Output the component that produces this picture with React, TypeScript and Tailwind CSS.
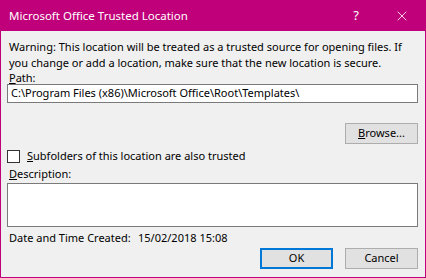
import { X } from "lucide-react";

export default function App() {
  return (
    <div className="flex h-[278px] w-[426px] flex-col overflow-hidden whitespace-nowrap border border-[#c0007a] bg-[#f0f0f0] font-['Noto_Sans',sans-serif] text-[11px] text-black">
      <div className="flex h-[30px] items-center bg-[#c0007a] pl-[8px] text-[11.5px] text-white">
        <span className="flex-1">Microsoft Office Trusted Location</span>
        <span className="w-[46px] text-center text-[13px]">?</span>
        <span className="flex w-[46px] items-center justify-center">
          <X size={16} strokeWidth={1.2} />
        </span>
      </div>
      <div className="flex flex-1 flex-col pl-[6px] pr-[7px] pt-[8px]">
        <p className="pl-[2px] leading-[16px]">
          Warning: This location will be treated as a trusted source for opening files. If
          <br />
          you change or add a location, make sure that the new location is secure.
        </p>
        <div className="pl-[2px] leading-[13px]">
          <u>P</u>ath:
        </div>
        <div className="flex h-[19px] items-center border border-[#7a7a7a] bg-white pl-[3px]">
          C:\Program Files (x86)\Microsoft Office\Root\Templates\
        </div>
        <div className="mt-[20px] flex justify-end">
          <button className="h-[21px] w-[73px] border border-[#adadad] bg-[#e1e1e1]">
            <u>B</u>rowse...
          </button>
        </div>
        <label className="mt-[6px] flex h-[13px] items-center gap-[7px]">
          <span className="h-[13px] w-[13px] border border-[#333] bg-white" />
          <span>
            <u>S</u>ubfolders of this location are also trusted
          </span>
        </label>
        <div className="mt-[3px] pl-[2px] leading-[16px]">
          <u>D</u>escription:
        </div>
        <div className="mt-[1px] h-[44px] border border-[#7a7a7a] bg-white" />
        <div className="mt-[3px] flex pl-[2px] leading-[16px]">
          <span className="w-[129px]">Date and Time Created:</span>
          <span>15/02/2018 15:08</span>
        </div>
        <div className="mt-[2px] flex justify-end gap-[12px]">
          <button className="h-[21px] w-[73px] border-2 border-[#0078d7] bg-[#e1e1e1]">OK</button>
          <button className="h-[21px] w-[73px] border border-[#adadad] bg-[#e1e1e1]">Cancel</button>
        </div>
      </div>
    </div>
  );
}
